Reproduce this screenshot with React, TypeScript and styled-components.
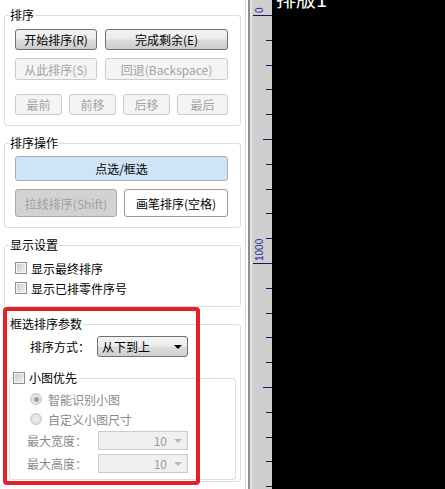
import styled, { createGlobalStyle } from "styled-components";

const GlobalStyle = createGlobalStyle`
  *, *::before, *::after { box-sizing: border-box; }
  html, body { margin: 0; padding: 0; background: #fff; overflow: hidden; }
  body {
    font-family: "Noto Sans CJK SC", "Microsoft YaHei", sans-serif;
    font-size: 12px;
    color: #000;
  }
`;

const Screen = styled.div`
  display: flex;
  width: 445px;
  height: 489px;
  overflow: hidden;
`;

const SidePanel = styled.div`
  position: relative;
  flex: none;
  width: 246px;
  padding-top: 8px;
  background: #fff;
  border-right: 1px solid #dadada;
  display: flex;
  flex-direction: column;
  gap: 10px;
`;

const Splitter = styled.div`
  flex: none;
  width: 6px;
  border-left: 2px solid #fff;
  border-right: 2px solid #e4e4e4;
  background: #8e8e8e;
`;

const RulerBar = styled.div`
  flex: none;
  width: 20px;
  background: #cfcfcf;
`;

const Canvas = styled.div`
  flex: 1;
  background: #000;
  color: #fff;
  padding-left: 4px;
`;

const CanvasTitle = styled.div`
  font-size: 20px;
  line-height: 20px;
  margin-top: -11px;
`;

const Group = styled.fieldset<{ $pad: string }>`
  margin: 0 0 0 4px;
  width: 237px;
  min-width: 0;
  padding: ${(p) => p.$pad};
  border: 1px solid #d5dfe5;
  border-radius: 3px;
`;

const SubGroup = styled.fieldset`
  margin: 14px 2px 0 0;
  min-width: 0;
  padding: 4px 2px 6px 17px;
  border: 1px solid #d5dfe5;
  border-radius: 3px;
`;

const Legend = styled.legend<{ $shift?: number }>`
  margin-left: ${(p) => p.$shift ?? -6}px;
  padding: 0 1px;
  line-height: 14px;
  font-size: 12px;
`;

const CheckLegend = styled.legend`
  margin-left: -14px;
  padding: 0 2px 0 0;
  line-height: 14px;
  display: flex;
  align-items: center;
  gap: 4px;
`;

const ButtonGrid = styled.div<{ $cols: string; $gap?: number }>`
  display: grid;
  grid-template-columns: ${(p) => p.$cols};
  column-gap: ${(p) => p.$gap ?? 8}px;
`;

const Stack = styled.div<{ $gap: number }>`
  display: flex;
  flex-direction: column;
  gap: ${(p) => p.$gap}px;
`;

type Tone = "normal" | "disabled" | "selected" | "pressed" | "plain";

const toneStyles: Record<Tone, string> = {
  normal: `
    border-color: #707070;
    color: #000;
    background: linear-gradient(#f3f3f3 0%, #ebebeb 48%, #dcdcdc 52%, #cdcdcd 100%);
  `,
  disabled: `
    border-color: #c9cbcd;
    color: #a3a3a3;
    background: #f4f4f4;
  `,
  selected: `
    border-color: #9fb3c4;
    color: #000;
    background: #cfe5f6;
  `,
  pressed: `
    border-color: #a9a9a9;
    color: #a0a0a0;
    background: #d2d2d2;
  `,
  plain: `
    border-color: #9b9b9b;
    color: #000;
    background: #fff;
  `,
};

const Button = styled.div<{ $tone: Tone; $h: number }>`
  height: ${(p) => p.$h}px;
  display: flex;
  align-items: center;
  justify-content: center;
  border: 1px solid;
  border-radius: 3px;
  font-size: 12px;
  white-space: nowrap;
  ${(p) => toneStyles[p.$tone]}
`;

const CheckRow = styled.div`
  height: 20px;
  display: flex;
  align-items: center;
  gap: 4px;
`;

const CheckBox = styled.span`
  width: 12px;
  height: 12px;
  flex: none;
  border: 1px solid #8e8f8f;
  background: linear-gradient(135deg, #c8c8c8 0%, #e2e2e2 60%, #f4f4f4 100%);
  box-shadow: inset 0 0 0 1px #f4f4f4;
`;

const RadioRow = styled.div`
  height: 20px;
  margin-left: 3px;
  display: flex;
  align-items: center;
  gap: 6px;
  color: #8a8a8a;
`;

const Radio = styled.span<{ $checked?: boolean }>`
  width: 12px;
  height: 12px;
  flex: none;
  border-radius: 50%;
  border: 1px solid #c4c4c4;
  background: radial-gradient(circle, #ececec 0%, #dcdcdc 100%);
  display: flex;
  align-items: center;
  justify-content: center;

  &::after {
    content: "";
    width: 5px;
    height: 5px;
    border-radius: 50%;
    background: ${(p) => (p.$checked ? "#9c9c9c" : "transparent")};
  }
`;

const FieldRow = styled.div<{ $indent: number; $gap: number }>`
  display: flex;
  align-items: center;
  margin-left: ${(p) => p.$indent}px;
  gap: ${(p) => p.$gap}px;
`;

const FieldLabel = styled.span<{ $muted?: boolean }>`
  width: 60px;
  flex: none;
  color: ${(p) => (p.$muted ? "#8a8a8a" : "#000")};
`;

const Dropdown = styled.div`
  width: 91px;
  height: 21px;
  display: flex;
  align-items: center;
  justify-content: space-between;
  padding: 0 5px 0 4px;
  border: 1px solid #707070;
  border-radius: 3px;
  background: linear-gradient(#f3f3f3 0%, #ebebeb 48%, #dcdcdc 52%, #d0d0d0 100%);
`;

const Caret = styled.span<{ $muted?: boolean }>`
  width: 0;
  height: 0;
  border-left: 4px solid transparent;
  border-right: 4px solid transparent;
  border-top: 4px solid ${(p) => (p.$muted ? "#b8b8b8" : "#000")};
`;

const SpinBox = styled.div`
  width: 90px;
  height: 19px;
  display: flex;
  align-items: center;
  justify-content: flex-end;
  gap: 7px;
  padding-right: 5px;
  border: 1px solid #cbcbcb;
  background: #f0f0f0;
  color: #9a9a9a;
`;

const Highlight = styled.div`
  position: absolute;
  left: 3px;
  top: 307px;
  width: 197px;
  height: 178px;
  border: 4px solid #e5202b;
  border-radius: 4px;
  pointer-events: none;
`;

const Ruler = () => {
  const ticks = Array.from({ length: 20 }, (_, k) => k);
  return (
    <svg width="20" height="489" viewBox="0 0 20 489">
      {ticks.map((k) => {
        const y = Math.round(15 + k * 24.8) + 0.5;
        const x1 = k % 10 === 0 ? 1 : k % 5 === 0 ? 11 : 14;
        return <line key={k} x1={x1} x2={20} y1={y} y2={y} stroke="#16166a" strokeWidth={1} />;
      })}
      <text x={11} y={13} transform="rotate(-90 11 13)" fontSize={10} fill="#2a2a9a" fontFamily="Liberation Sans, sans-serif">
        0
      </text>
      <text x={11} y={261} transform="rotate(-90 11 261)" fontSize={10} fill="#2a2a9a" fontFamily="Liberation Sans, sans-serif">
        1000
      </text>
    </svg>
  );
};

export default function App() {
  return (
    <Screen>
      <GlobalStyle />
      <SidePanel>
        <Group $pad="7px 12px 10px 10px">
          <Legend>排序</Legend>
          <ButtonGrid $cols="82px 1fr">
            <Button $tone="normal" $h={21}>开始排序(R)</Button>
            <Button $tone="normal" $h={21}>完成剩余(E)</Button>
          </ButtonGrid>
          <ButtonGrid $cols="82px 1fr" style={{ marginTop: 8 }}>
            <Button $tone="disabled" $h={22}>从此排序(S)</Button>
            <Button $tone="disabled" $h={22}>回退(Backspace)</Button>
          </ButtonGrid>
          <ButtonGrid $cols="47px 47px 47px 1fr" $gap={7} style={{ marginTop: 14 }}>
            <Button $tone="disabled" $h={21}>最前</Button>
            <Button $tone="disabled" $h={21}>前移</Button>
            <Button $tone="disabled" $h={21}>后移</Button>
            <Button $tone="disabled" $h={21}>最后</Button>
          </ButtonGrid>
        </Group>

        <Group $pad="6px 12px 10px 10px">
          <Legend>排序操作</Legend>
          <Stack $gap={8}>
            <Button $tone="selected" $h={25}>点选/框选</Button>
            <ButtonGrid $cols="102px 1fr" $gap={7}>
              <Button $tone="pressed" $h={28}>拉线排序(Shift)</Button>
              <Button $tone="plain" $h={28}>画笔排序(空格)</Button>
            </ButtonGrid>
          </Stack>
        </Group>

        <Group $pad="6px 12px 8px 10px">
          <Legend>显示设置</Legend>
          <CheckRow>
            <CheckBox />
            显示最终排序
          </CheckRow>
          <CheckRow>
            <CheckBox />
            显示已排零件序号
          </CheckRow>
        </Group>

        <Group $pad="5px 2px 1px 4px">
          <Legend $shift={0}>框选排序参数</Legend>
          <FieldRow $indent={21} $gap={7}>
            <FieldLabel>排序方式：</FieldLabel>
            <Dropdown>
              从下到上
              <Caret />
            </Dropdown>
          </FieldRow>
          <SubGroup>
            <CheckLegend>
              <CheckBox />
              小图优先
            </CheckLegend>
            <RadioRow>
              <Radio $checked />
              智能识别小图
            </RadioRow>
            <RadioRow>
              <Radio />
              自定义小图尺寸
            </RadioRow>
            <Stack $gap={4} style={{ marginTop: 2 }}>
              <FieldRow $indent={0} $gap={11}>
                <FieldLabel $muted>最大宽度：</FieldLabel>
                <SpinBox>
                  10
                  <Caret $muted />
                </SpinBox>
              </FieldRow>
              <FieldRow $indent={0} $gap={11}>
                <FieldLabel $muted>最大高度：</FieldLabel>
                <SpinBox>
                  10
                  <Caret $muted />
                </SpinBox>
              </FieldRow>
            </Stack>
          </SubGroup>
        </Group>

        <Highlight />
      </SidePanel>
      <Splitter />
      <RulerBar>
        <Ruler />
      </RulerBar>
      <Canvas>
        <CanvasTitle>排版1</CanvasTitle>
      </Canvas>
    </Screen>
  );
}
